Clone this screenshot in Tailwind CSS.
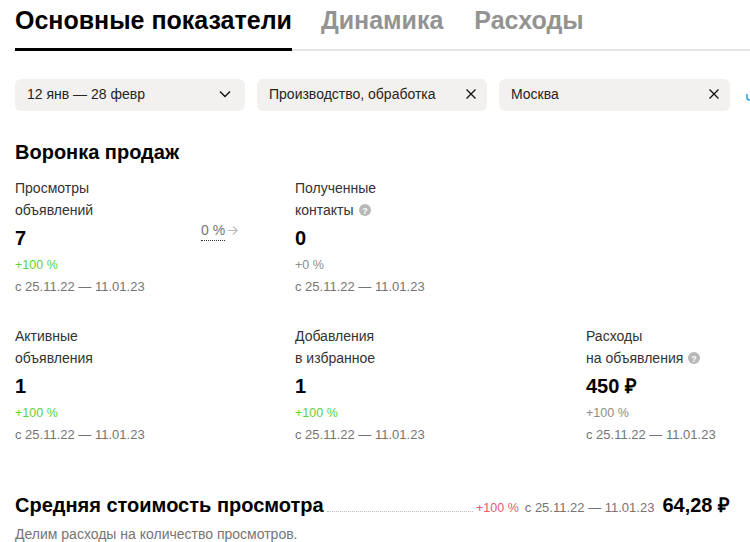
<!DOCTYPE html>
<html lang="ru"><head><meta charset="utf-8"><script src="https://cdn.jsdelivr.net/npm/@tailwindcss/browser@4"></script></head>
<body class="bg-white overflow-hidden w-[750px] h-[542px] font-['Liberation_Sans',Arial,sans-serif] text-black">
<nav class="flex ml-[15px] h-[51px] border-b-2 border-[#e5e5e5] text-[25px] font-bold leading-[40px] text-[#939393]">
  <div class="h-[51px] border-b-[3px] border-black text-black">Основные показатели</div>
  <div class="ml-[29px]">Динамика</div>
  <div class="ml-[31px]">Расходы</div>
</nav>
<div class="flex items-center mt-[28px] ml-[15px] gap-3 w-[735px] text-sm text-[#242424] overflow-hidden">
  <div class="flex items-center justify-between w-[230px] h-8 shrink-0 rounded-md bg-[#f2f1f0] pl-3 pr-[14px] pb-[2px]"><span>12 янв — 28 февр</span>
    <svg class="w-3 h-2" viewBox="0 0 12 8" fill="none" stroke="#111" stroke-width="1.4"><path d="M1 1.5l5 5 5-5"/></svg></div>
  <div class="flex items-center justify-between w-[230px] h-8 shrink-0 rounded-md bg-[#f2f1f0] pl-3 pr-[11px] pb-[2px]"><span>Производство, обработка</span>
    <svg class="w-[10px] h-[10px]" viewBox="0 0 10 10" fill="none" stroke="#111" stroke-width="1.3"><path d="M.5.5l9 9M9.5.5l-9 9"/></svg></div>
  <div class="flex items-center justify-between w-[231px] h-8 shrink-0 rounded-md bg-[#f2f1f0] pl-3 pr-[11px] pb-[2px]"><span>Москва</span>
    <svg class="w-[10px] h-[10px]" viewBox="0 0 10 10" fill="none" stroke="#111" stroke-width="1.3"><path d="M.5.5l9 9M9.5.5l-9 9"/></svg></div>
  <svg class="w-2 h-2 shrink-0 ml-1 mt-1" viewBox="0 0 8 8" fill="none" stroke="#2a9fd8" stroke-width="1.5"><path d="M1 1v3.5a2.5 2.5 0 0 0 5 0"/></svg>
</div>
<h2 class="ml-[15px] mt-[28px] text-[20px] leading-[26px] font-bold">Воронка продаж</h2>
<div class="grid grid-cols-[280px_291px_1fr] ml-[15px] mt-[12px] gap-y-[26px] text-sm leading-[22px]">
  <div class="relative h-[122px]">
    <div class="text-[#333]">Просмотры<br>объявлений</div>
    <div class="mt-[4px] text-[20px] leading-[26px] font-bold">7</div>
    <div class="mt-[3px] text-[12.5px] leading-[22px] text-[#5fcf3a]">+100 %</div>
    <div class="text-[13px] text-[#757575]">с 25.11.22 — 11.01.23</div>
    <div class="absolute left-[186px] top-[46px] flex items-start text-[#757575]"><span class="border-b border-dotted border-[#333] leading-[15px] pb-[2px]">0 %</span>
      <svg class="w-[11px] h-[11px] ml-[2px] mt-[2px]" viewBox="0 0 12 12" fill="none" stroke="#bbb" stroke-width="1.3"><path d="M1 6h10M6.5 1.5L11 6l-4.5 4.5"/></svg></div>
  </div>
  <div class="h-[122px]">
    <div class="text-[#333]">Полученные<br><span class="inline-flex items-center gap-[5px]">контакты
      <svg class="w-3 h-3" viewBox="0 0 12 12"><circle cx="6" cy="6" r="6" fill="#b8b8b8"/><text x="6" y="9.5" text-anchor="middle" font-size="9" font-weight="700" fill="#fff" font-family="Liberation Sans">?</text></svg></span></div>
    <div class="mt-[4px] text-[20px] leading-[26px] font-bold">0</div>
    <div class="mt-[3px] text-[12.5px] leading-[22px] text-[#8c8c8c]">+0 %</div>
    <div class="text-[13px] text-[#757575]">с 25.11.22 — 11.01.23</div>
  </div>
  <div></div>
  <div class="h-[122px]">
    <div class="text-[#333]">Активные<br>объявления</div>
    <div class="mt-[4px] text-[20px] leading-[26px] font-bold">1</div>
    <div class="mt-[3px] text-[12.5px] leading-[22px] text-[#5fcf3a]">+100 %</div>
    <div class="text-[13px] text-[#757575]">с 25.11.22 — 11.01.23</div>
  </div>
  <div class="h-[122px]">
    <div class="text-[#333]">Добавления<br>в избранное</div>
    <div class="mt-[4px] text-[20px] leading-[26px] font-bold">1</div>
    <div class="mt-[3px] text-[12.5px] leading-[22px] text-[#5fcf3a]">+100 %</div>
    <div class="text-[13px] text-[#757575]">с 25.11.22 — 11.01.23</div>
  </div>
  <div class="h-[122px]">
    <div class="text-[#333]">Расходы<br><span class="inline-flex items-center gap-[5px]">на объявления
      <svg class="w-3 h-3" viewBox="0 0 12 12"><circle cx="6" cy="6" r="6" fill="#b8b8b8"/><text x="6" y="9.5" text-anchor="middle" font-size="9" font-weight="700" fill="#fff" font-family="Liberation Sans">?</text></svg></span></div>
    <div class="mt-[4px] text-[20px] leading-[26px] font-bold">450 ₽</div>
    <div class="mt-[3px] text-[12.5px] leading-[22px] text-[#8c8c8c]">+100 %</div>
    <div class="text-[13px] text-[#757575]">с 25.11.22 — 11.01.23</div>
  </div>
</div>
<div class="flex items-baseline ml-[15px] w-[715px] mt-[45px]">
  <div class="text-[20px] leading-[26px] font-bold">Средняя стоимость просмотра</div>
  <div class="flex-1 mx-[3px] border-b border-dotted border-[#bbb]"></div>
  <div class="text-[12.5px] text-[#e8596e]">+100 %</div>
  <div class="ml-[6px] text-[13px] text-[#757575]">с 25.11.22 — 11.01.23</div>
  <div class="ml-2 text-[20px] leading-[26px] font-bold">64,28 ₽</div>
</div>
<p class="ml-[15px] mt-[5px] text-sm leading-[22px] text-[#757575]">Делим расходы на количество просмотров.</p>
</body></html>
